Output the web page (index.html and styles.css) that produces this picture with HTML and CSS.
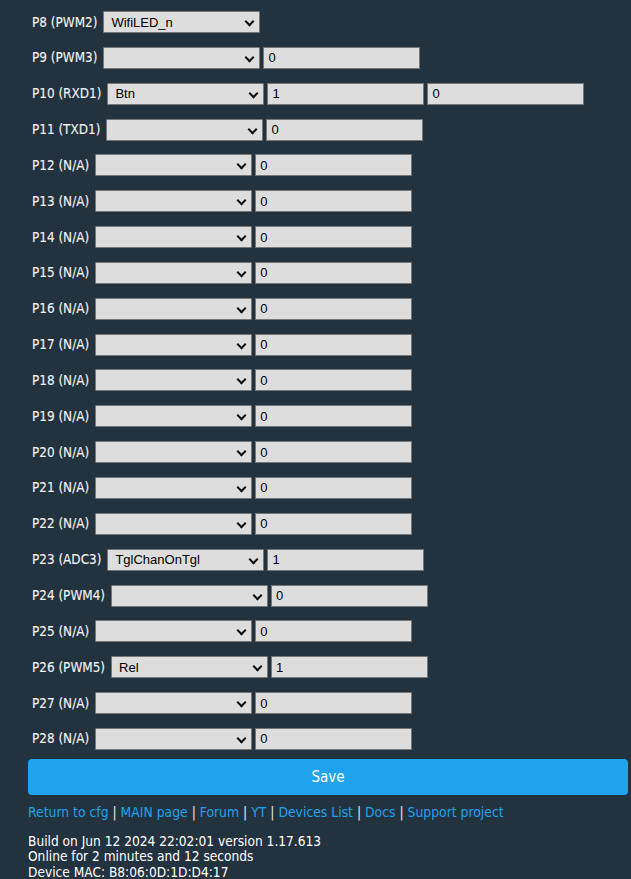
FILE: index.html
```html
<!DOCTYPE html>
<html>
<head>
<meta charset="utf-8">
<link rel="stylesheet" href="styles.css">
</head>
<body>
<div class="page">
  <div class="pins">
    <div class="row"><span class="lbl">P8 (PWM2)</span><div class="sel">WifiLED_n</div></div>
    <div class="row"><span class="lbl">P9 (PWM3)</span><div class="sel"></div><div class="inp">0</div></div>
    <div class="row"><span class="lbl">P10 (RXD1)</span><div class="sel">Btn</div><div class="inp">1</div><div class="inp">0</div></div>
    <div class="row"><span class="lbl">P11 (TXD1)</span><div class="sel"></div><div class="inp">0</div></div>
    <div class="row"><span class="lbl">P12 (N/A)</span><div class="sel"></div><div class="inp">0</div></div>
    <div class="row"><span class="lbl">P13 (N/A)</span><div class="sel"></div><div class="inp">0</div></div>
    <div class="row"><span class="lbl">P14 (N/A)</span><div class="sel"></div><div class="inp">0</div></div>
    <div class="row"><span class="lbl">P15 (N/A)</span><div class="sel"></div><div class="inp">0</div></div>
    <div class="row"><span class="lbl">P16 (N/A)</span><div class="sel"></div><div class="inp">0</div></div>
    <div class="row"><span class="lbl">P17 (N/A)</span><div class="sel"></div><div class="inp">0</div></div>
    <div class="row"><span class="lbl">P18 (N/A)</span><div class="sel"></div><div class="inp">0</div></div>
    <div class="row"><span class="lbl">P19 (N/A)</span><div class="sel"></div><div class="inp">0</div></div>
    <div class="row"><span class="lbl">P20 (N/A)</span><div class="sel"></div><div class="inp">0</div></div>
    <div class="row"><span class="lbl">P21 (N/A)</span><div class="sel"></div><div class="inp">0</div></div>
    <div class="row"><span class="lbl">P22 (N/A)</span><div class="sel"></div><div class="inp">0</div></div>
    <div class="row"><span class="lbl">P23 (ADC3)</span><div class="sel">TglChanOnTgl</div><div class="inp">1</div></div>
    <div class="row"><span class="lbl">P24 (PWM4)</span><div class="sel"></div><div class="inp">0</div></div>
    <div class="row"><span class="lbl">P25 (N/A)</span><div class="sel"></div><div class="inp">0</div></div>
    <div class="row"><span class="lbl">P26 (PWM5)</span><div class="sel">Rel</div><div class="inp">1</div></div>
    <div class="row"><span class="lbl">P27 (N/A)</span><div class="sel"></div><div class="inp">0</div></div>
    <div class="row"><span class="lbl">P28 (N/A)</span><div class="sel"></div><div class="inp">0</div></div>
  </div>
  <button class="save">Save</button>
  <div class="links">
    <a href="#">Return to cfg</a> | <a href="#">MAIN page</a> | <a href="#">Forum</a> | <a href="#">YT</a> | <a href="#">Devices List</a> | <a href="#">Docs</a> | <a href="#">Support project</a>
  </div>
  <div class="info">
    <div>Build on Jun 12 2024 22:02:01 version 1.17.613</div>
    <div>Online for 2 minutes and 12 seconds</div>
    <div>Device MAC: B8:06:0D:1D:D4:17</div>
  </div>
</div>
</body>
</html>
```
FILE: styles.css
```css
html, body {
  margin: 0;
  padding: 0;
  background: #22323f;
  overflow: hidden;
}
body {
  font-family: "DejaVu Sans", Verdana, sans-serif;
  font-stretch: condensed;
  color: #eaeaea;
}
.page {
  padding: 11px 0 0 28px;
  width: 600px;
}
.pins {
  display: flex;
  flex-direction: column;
  gap: 13.85px;
}
.row {
  display: flex;
  align-items: center;
  height: 22px;
  padding-left: 4px;
}
.lbl {
  font-size: 13.4px;
  font-weight: normal;
  color: #f2f2f2;
  -webkit-text-stroke: 0.12px #f2f2f2;
  margin-right: 6px;
  white-space: nowrap;
}
.sel, .inp {
  box-sizing: border-box;
  height: 22px;
  width: 157px;
  background: #dddddd;
  border: 1px solid #767676;
  font-family: "Liberation Sans", Arial, sans-serif;
  font-stretch: normal;
  font-size: 13px;
  color: #000;
  display: flex;
  align-items: center;
  padding-left: 4px;
}
.sel {
  position: relative;
  padding-left: 7px;
  margin-right: 3px;
  border-radius: 1px;
}
.sel::after {
  content: "";
  position: absolute;
  right: 6px;
  top: 6px;
  width: 5px;
  height: 5px;
  border-right: 2px solid #111;
  border-bottom: 2px solid #111;
  transform: rotate(45deg);
}
.inp {
  margin-right: 3px;
}
.save {
  display: block;
  margin-top: 9px;
  width: 600px;
  height: 36px;
  background: #1fa3ec;
  color: #fff;
  border: 0;
  border-radius: 4px;
  font-family: "DejaVu Sans", Verdana, sans-serif;
  font-stretch: condensed;
  font-size: 15px;
  padding: 0;
}
.links {
  margin-top: 9px;
  font-size: 13.8px;
  line-height: 16px;
  color: #eaeaea;
}
.links a {
  color: #1fa3ec;
  text-decoration: none;
}
.info {
  margin-top: 14px;
  font-size: 13.6px;
  line-height: 15.5px;
  color: #fff;
}
```
